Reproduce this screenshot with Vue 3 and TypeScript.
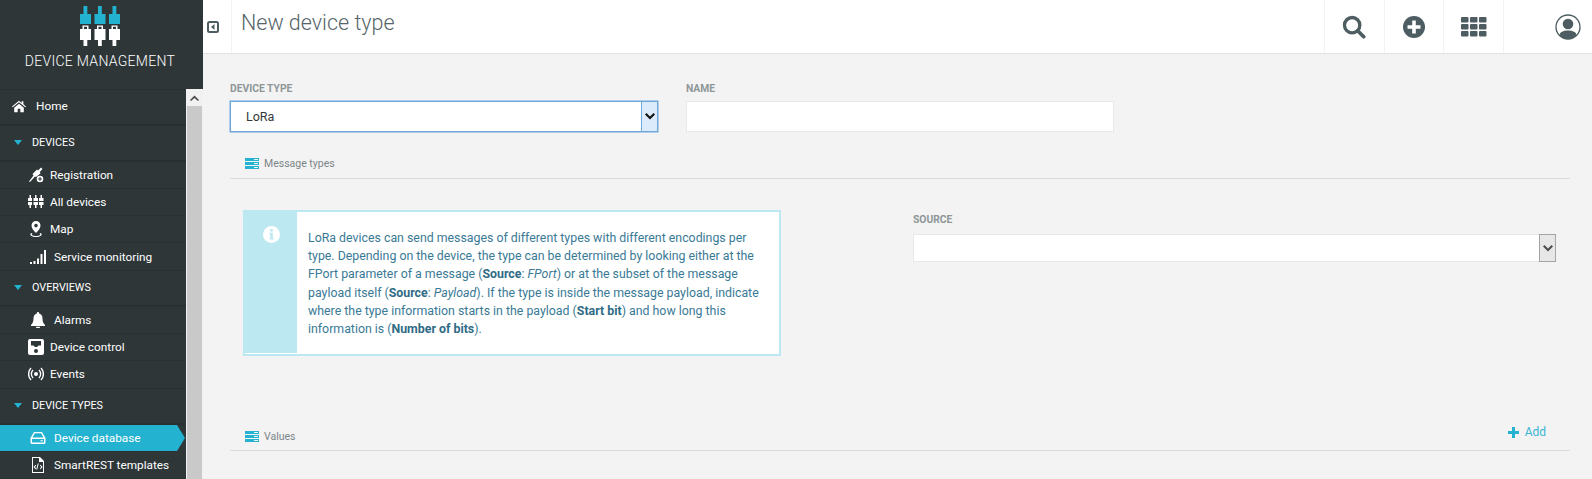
<script setup lang="ts">
interface NavItem {
  label: string
  icon: string
  kind: 'link' | 'group'
  active?: boolean
  wide?: boolean
}

const nav: NavItem[] = [
  { label: 'Home', icon: 'home', kind: 'link' },
  { label: 'DEVICES', icon: '', kind: 'group' },
  { label: 'Registration', icon: 'plug', kind: 'link' },
  { label: 'All devices', icon: 'all', kind: 'link' },
  { label: 'Map', icon: 'pin', kind: 'link' },
  { label: 'Service monitoring', icon: 'bars', kind: 'link', wide: true },
  { label: 'OVERVIEWS', icon: '', kind: 'group' },
  { label: 'Alarms', icon: 'bell', kind: 'link', wide: true },
  { label: 'Device control', icon: 'control', kind: 'link' },
  { label: 'Events', icon: 'signal', kind: 'link' },
  { label: 'DEVICE TYPES', icon: '', kind: 'group' },
  { label: 'Device database', icon: 'disk', kind: 'link', active: true, wide: true },
  { label: 'SmartREST templates', icon: 'file', kind: 'link', wide: true },
]

const deviceType = 'LoRa'
const plugCols = [0, 14.5, 29]
</script>

<template>
  <div class="app">
    <aside class="sidebar">
      <div class="brand">
        <svg class="logo" width="40" height="40" viewBox="0 0 40 40">
          <g v-for="x in plugCols" :key="x" :transform="`translate(${x} 0)`">
            <path d="M3.500 0h3.800v8H11v10H0V8h3.500z" fill="#23b3d1" />
            <path fill-rule="evenodd" d="M2.500 19.500h6V23H11v11H7.300v6H3.500v-6H0V23h2.500zm1.500 1.200V23h3v-2.300z" fill="#fff" />
          </g>
        </svg>
        <div class="brand-name">DEVICE MANAGEMENT</div>
      </div>
      <div class="nav-wrap">
        <nav class="nav">
          <div
            v-for="item in nav"
            :key="item.label"
            :class="[item.kind, { active: item.active, wide: item.wide, home: item.icon === 'home' }]"
          >
            <svg v-if="item.kind === 'group'" class="caret" width="8" height="5" viewBox="0 0 8 5">
              <path d="M0 0h8L4 5z" fill="#23b3d1" />
            </svg>
            <svg v-else class="nav-icon" width="16" height="16" viewBox="0 0 16 16" fill="#fff" fill-rule="evenodd">
              <path v-if="item.icon === 'home'" d="M8 2 0 8.500l.8 1L8 3.800l7.200 5.700.8-1L13 6V2.500h-2v2zM2.500 10v5h4v-4h3v4h4v-5L8 5.500z" />
              <path v-else-if="item.icon === 'plug'" d="M1 14.500 5.500 8.500 4.500 7 9 2.500 10 3.500 13 .5 14.500 2 11.800 5 12.500 6.500 8 10 7 9.500 2 15zM12 8.700a3.300 3.300 0 1 0 0 6.600 3.300 3.300 0 0 0 0-6.600zm-.6 1.500h1.200v1.200h1.200v1.200h-1.200v1.200h-1.200v-1.200h-1.200v-1.200h1.200z" />
              <path v-else-if="item.icon === 'all'" d="M1.500 1h1.500v3h1v3H0V4h1.500zM7 1h1.500v3h1.500v3H5.500V4H7zM12.500 1H14v3h1.500v3H11V4h1.500zM0 8h4v3H3v3H1.500v-3H0zM5.500 8H10v3H8.500v3H7v-3H5.500zM11 8h4.500v3H14v3h-1.500v-3H11z" />
              <path v-else-if="item.icon === 'pin'" d="M8 0a4.500 4.500 0 0 0-4.500 4.500C3.500 8 8 12 8 12s4.500-4 4.500-7.500A4.500 4.500 0 0 0 8 0zm0 2.800a1.800 1.800 0 1 1 0 3.600 1.800 1.800 0 0 1 0-3.600zM3.500 12C2 12.500 2 14 3 14.800 4.200 15.700 6 16 8 16s3.800-.3 5-1.200c1-.8 1-2.300-.5-2.800l-1 1c1 .3 1 .8.300 1.200-.8.400-2.200.7-3.800.7s-3-.3-3.800-.7c-.7-.4-.7-.9.300-1.200z" />
              <path v-else-if="item.icon === 'bars'" d="M0 13h2v2H0zM3.500 12h2v3h-2zM7 9.500h2V15H7zM10.500 5h2v10h-2zM14 1h2v14h-2z" />
              <path v-else-if="item.icon === 'bell'" d="M8 0a1.300 1.300 0 0 0-1.200 1.500C4.500 2.200 3.500 4 3.500 6.500c0 3.500-1 5-2.500 6.500v1h14v-1c-1.500-1.500-2.500-3-2.500-6.500 0-2.500-1-4.300-3.300-5A1.300 1.300 0 0 0 8 0zM6 14.800a2 2 0 0 0 4 0z" />
              <path v-else-if="item.icon === 'control'" d="M2 0h12a2 2 0 0 1 2 2v12a2 2 0 0 1-2 2H2a2 2 0 0 1-2-2V2a2 2 0 0 1 2-2zm1 2v4.500h2.500L7 8h2l1.500-1.500H13V2zM8 10a2 2 0 1 0 0 4 2 2 0 0 0 0-4z" />
              <path v-else-if="item.icon === 'signal'" d="M8 6a2 2 0 1 1 0 4 2 2 0 0 1 0-4zM4.500 3.500l1 1a5 5 0 0 0 0 7l-1 1a6.500 6.500 0 0 1 0-9zm7 0a6.500 6.500 0 0 1 0 9l-1-1a5 5 0 0 0 0-7zM2.500 1.500l1 1a8 8 0 0 0 0 11l-1 1a9.500 9.500 0 0 1 0-13zm11 0a9.500 9.500 0 0 1 0 13l-1-1a8 8 0 0 0 0-11z" />
              <path v-else-if="item.icon === 'disk'" d="M4 2h8l3.500 6v4.500A1.500 1.500 0 0 1 14 14H2a1.500 1.500 0 0 1-1.500-1.500V8zm.8 1.300L2.500 7.500h11l-2.300-4.200zM2 9v3.500h12V9zm8.500 1.200H13v1h-2.500z" />
              <path v-else d="M2 0h8l4 4v12H2zm1 1v14h10V5H9V1zm4.800 5.500h1l-1.600 6h-1zM5.600 7.700l.7.700L4.900 10l1.400 1.600-.7.700L3.500 10zm5 0 2 2.300-2 2.300-.7-.7 1.400-1.600-1.400-1.600z" />
            </svg>
            <span>{{ item.label }}</span>
          </div>
        </nav>
        <div class="scrollbar">
          <div class="scroll-btn">
            <svg width="9" height="6" viewBox="0 0 9 6"><path d="M0 5 4.500.5 9 5l-1 1-3.500-3L1 6z" fill="#4a4a4a" /></svg>
          </div>
        </div>
      </div>
    </aside>

    <div class="content">
      <header class="topbar">
        <button class="collapse" type="button" aria-label="Collapse navigation">
          <svg width="12" height="12" viewBox="0 0 12 12">
            <rect x="1" y="1" width="10" height="10" rx="1.500" fill="none" stroke="#4d5d61" stroke-width="2" />
            <path d="M7.500 3v6L4 6z" fill="#4d5d61" />
          </svg>
        </button>
        <h1 class="title">New device type</h1>
        <div class="top-actions">
          <div class="action">
            <svg width="24" height="24" viewBox="0 0 26 26">
              <circle cx="11" cy="11" r="8.300" fill="none" stroke="#4d5d61" stroke-width="3.600" />
              <path d="m17 17 6.500 6.500" stroke="#4d5d61" stroke-width="4" stroke-linecap="round" />
            </svg>
          </div>
          <div class="action">
            <svg width="22" height="22" viewBox="0 0 22 22">
              <circle cx="11" cy="11" r="11" fill="#4d5d61" />
              <path d="M9.200 4.500h3.600v4.700h4.700v3.600h-4.700v4.700H9.200v-4.700H4.500V9.200h4.700z" fill="#fff" />
            </svg>
          </div>
          <div class="action">
            <svg width="26" height="20" viewBox="0 0 26 20" fill="#4d5d61">
              <template v-for="r in 3" :key="r">
                <rect v-for="c in 3" :key="c" :x="(c - 1) * 9" :y="(r - 1) * 7" width="7.500" height="5.500" rx="1" />
              </template>
            </svg>
          </div>
          <div class="action last">
            <svg width="26" height="26" viewBox="0 0 26 26">
              <circle cx="13" cy="13" r="12" fill="#fff" stroke="#4d5d61" stroke-width="1.300" />
              <circle cx="13" cy="10" r="5.300" fill="#4d5d61" />
              <path d="M4.500 21c.5-3 3.500-4.500 8.500-4.500s8 1.500 8.500 4.500a11 11 0 0 1-17 0z" fill="#4d5d61" />
            </svg>
          </div>
        </div>
      </header>

      <main class="page">
        <div class="top-fields">
          <div class="field type-field">
            <label class="label">DEVICE TYPE</label>
            <div class="select focused">
              <select><option>{{ deviceType }}</option></select>
              <span class="select-btn">
                <svg width="10" height="7" viewBox="0 0 10 7"><path d="M0 1.500 1.500 0 5 3.500 8.500 0 10 1.500 5 6.500z" /></svg>
              </span>
            </div>
          </div>
          <div class="field name-field">
            <label class="label">NAME</label>
            <input class="input" type="text" />
          </div>
        </div>

        <div class="section-head first">
          <svg class="list-icon" width="14" height="11" viewBox="0 0 14 11">
            <path d="M0 0h14v3H0zM0 4h14v3H0zM0 8h14v3H0z" fill="#23b3d1" />
            <path d="M9 1h4v1H9zM9 5h4v1H9zM9 9h4v1H9z" fill="#eaf7fa" />
          </svg>
          <span>Message types</span>
        </div>

        <div class="message-row">
          <div class="info">
            <div class="info-side">
              <svg width="17" height="17" viewBox="0 0 17 17">
                <circle cx="8.500" cy="8.500" r="8.500" fill="#fff" />
                <path d="M7.200 3h2.600v2.400H7.200zM6.500 6.800h3.300v5.400h1v1.400H6.500v-1.400h.8V8.200h-.8z" fill="#bce8f1" />
              </svg>
            </div>
            <p class="info-text">
              LoRa devices can send messages of different types with different encodings per
              type. Depending on the device, the type can be determined by looking either at the
              FPort parameter of a message (<b>Source</b>: <i>FPort</i>) or at the subset of the message
              payload itself (<b>Source</b>: <i>Payload</i>). If the type is inside the message payload, indicate
              where the type information starts in the payload (<b>Start bit</b>) and how long this
              information is (<b>Number of bits</b>).
            </p>
          </div>
          <div class="field source-field">
            <label class="label">SOURCE</label>
            <div class="select">
              <select></select>
              <span class="select-btn">
                <svg width="10" height="7" viewBox="0 0 10 7"><path d="M0 1.500 1.500 0 5 3.500 8.500 0 10 1.500 5 6.500z" /></svg>
              </span>
            </div>
          </div>
        </div>

        <div class="section-head values">
          <svg class="list-icon" width="14" height="11" viewBox="0 0 14 11">
            <path d="M0 0h14v3H0zM0 4h14v3H0zM0 8h14v3H0z" fill="#23b3d1" />
            <path d="M9 1h4v1H9zM9 5h4v1H9zM9 9h4v1H9z" fill="#eaf7fa" />
          </svg>
          <span>Values</span>
          <a class="add">
            <svg width="11" height="11" viewBox="0 0 11 11"><path d="M4 0h3v4h4v3H7v4H4V7H0V4h4z" fill="#23b3d1" /></svg>
            Add
          </a>
        </div>
      </main>
    </div>
  </div>
</template>

<style>
html, body {
  margin: 0;
  height: 100%;
  overflow: hidden;
}
</style>

<style scoped>
.app {
  display: flex;
  height: 479px;
  font-family: Roboto, "Liberation Sans", sans-serif;
  overflow: hidden;
}
.sidebar {
  width: 203px;
  flex: none;
  background: #2e3638;
  color: #fff;
  display: flex;
  flex-direction: column;
}
.brand {
  height: 89px;
  display: flex;
  flex-direction: column;
  align-items: center;
  box-sizing: border-box;
}
.logo {
  margin-top: 6px;
  margin-left: -3px;
}
.brand-name {
  font-size: 14px;
  font-weight: 300;
  letter-spacing: 0.300px;
  margin: 6px 0 0 -3px;
  line-height: 18px;
}
.nav-wrap {
  flex: 1;
  display: flex;
  min-height: 0;
}
.nav {
  width: 186px;
  flex: none;
  border-top: 1px solid #283032;
  box-sizing: border-box;
}
.link,
.group {
  display: flex;
  align-items: center;
  box-sizing: border-box;
  border-bottom: 1px solid #283032;
  font-size: 11.800px;
  position: relative;
}
.link {
  height: 27.300px;
  padding-left: 28px;
}
.link.home {
  height: 35.500px;
  padding-left: 12px;
  padding-bottom: 2px;
  border-bottom-width: 2px;
}
.group {
  height: 36px;
  padding-left: 14px;
  padding-bottom: 1px;
  font-size: 10.800px;
  border-bottom-width: 2px;
}
.caret {
  margin-right: 10px;
}
.nav-icon {
  margin-right: 6px;
  flex: none;
}
.home .nav-icon {
  margin-right: 10px;
  width: 14px;
  height: 14px;
}
.wide .nav-icon {
  margin-left: 2px;
  margin-right: 8px;
}
.link.active {
  background: #23b3d1;
  margin-right: 9px;
}
.link.active::after {
  content: "";
  position: absolute;
  right: -8px;
  top: 0;
  bottom: 0;
  border-left: 8px solid #23b3d1;
  border-top: 13px solid transparent;
  border-bottom: 13px solid transparent;
}
.scrollbar {
  width: 17px;
  flex: none;
  background: #c9c9c9;
  border-left: 1px solid #f1f1f1;
  border-right: 1px solid #f1f1f1;
  box-sizing: border-box;
}
.scroll-btn {
  height: 17px;
  background: #f1f1f1;
  margin: 0 -1px;
  display: flex;
  align-items: center;
  justify-content: center;
}
.content {
  flex: 1;
  min-width: 0;
  display: flex;
  flex-direction: column;
  background: #f3f3f3;
}
.topbar {
  height: 54px;
  flex: none;
  background: #fff;
  border-bottom: 1px solid #e2e2e2;
  box-sizing: border-box;
  display: flex;
  align-items: center;
}
.collapse {
  width: 29px;
  height: 100%;
  flex: none;
  border: 0;
  border-right: 1px solid #f3f3f3;
  background: none;
  padding: 0 0 0 4px;
  display: flex;
  align-items: center;
  justify-content: flex-start;
}
.title {
  margin: 0 0 8px 9px;
  font-size: 21.500px;
  font-weight: 300;
  color: #566569;
  flex: 1;
}
.top-actions {
  display: flex;
  height: 100%;
}
.action {
  width: 59.700px;
  box-sizing: border-box;
  border-left: 1px solid #f3f3f3;
  display: flex;
  align-items: center;
  justify-content: center;
}
.action.last {
  width: 89px;
  justify-content: flex-end;
  padding-right: 11px;
}
.page {
  flex: 1;
  padding: 0 22px 0 27px;
}
.top-fields {
  display: flex;
  gap: 28px;
  padding-top: 28px;
}
.label {
  display: block;
  font-size: 10.300px;
  font-weight: 700;
  line-height: 14px;
  color: #8e9698;
  margin-bottom: 5px;
}
.type-field {
  width: 428px;
}
.name-field {
  width: 428px;
}
.select {
  position: relative;
  height: 31px;
  background: #fff;
  box-sizing: border-box;
  border: 1px solid #e8e8e8;
}
.select select {
  appearance: none;
  width: 100%;
  height: 100%;
  border: 0;
  background: transparent;
  outline: 0;
  padding: 0 0 0 15px;
  font: 12.500px Roboto, sans-serif;
  color: #33393b;
}
.select-btn {
  position: absolute;
  right: -1px;
  top: -1px;
  bottom: -1px;
  width: 17px;
  background: #e7e7e7;
  border: 1px solid #a5a5a5;
  display: flex;
  align-items: center;
  justify-content: center;
  box-sizing: border-box;
}
.select-btn svg {
  fill: #505050;
}
.select.focused {
  border: 1px solid #6fa8dc;
  box-shadow: 0 0 0 0.500px #6fa8dc;
}
.select.focused .select-btn {
  background: #dcebfb;
  border-color: #6fa8dc;
}
.select.focused .select-btn svg {
  fill: #111;
}
.input {
  display: block;
  width: 100%;
  height: 31px;
  box-sizing: border-box;
  border: 1px solid #e8e8e8;
  background: #fff;
  outline: 0;
}
.section-head {
  display: flex;
  align-items: center;
  gap: 5px;
  height: 28px;
  padding: 0 0 2px 15px;
  box-sizing: border-box;
  border-bottom: 1px solid #dcdcdc;
  color: #7b8689;
  font-size: 10.500px;
}
.section-head.first {
  margin-top: 19px;
}
.message-row {
  display: flex;
  gap: 132px;
  padding-top: 31px;
  margin: 0 14px 0 13px;
}
.info {
  width: 538px;
  height: 146px;
  box-sizing: border-box;
  flex: none;
  border: 2px solid #bce8f1;
  background: #fff;
  display: flex;
}
.info-side {
  width: 52px;
  flex: none;
  background: #bce8f1;
  display: flex;
  justify-content: center;
  padding-top: 14px;
  box-sizing: border-box;
  margin-bottom: 1px;
}
.info-text {
  margin: 17px 0 0 11px;
  font-size: 12.350px;
  line-height: 18.200px;
  color: #3a7a96;
  width: 458px;
}
.info-text b {
  color: #2f6b85;
}
.source-field {
  flex: 1;
  margin-top: 3px;
}
.source-field .label {
  margin-bottom: 7px;
}
.source-field .select {
  height: 28px;
}
.section-head.values {
  margin-top: 67px;
  padding-bottom: 1px;
}
.add {
  margin: 0 24px 8px auto;
  display: flex;
  align-items: center;
  gap: 6px;
  color: #3bb5d3;
  font-size: 12px;
}
</style>
